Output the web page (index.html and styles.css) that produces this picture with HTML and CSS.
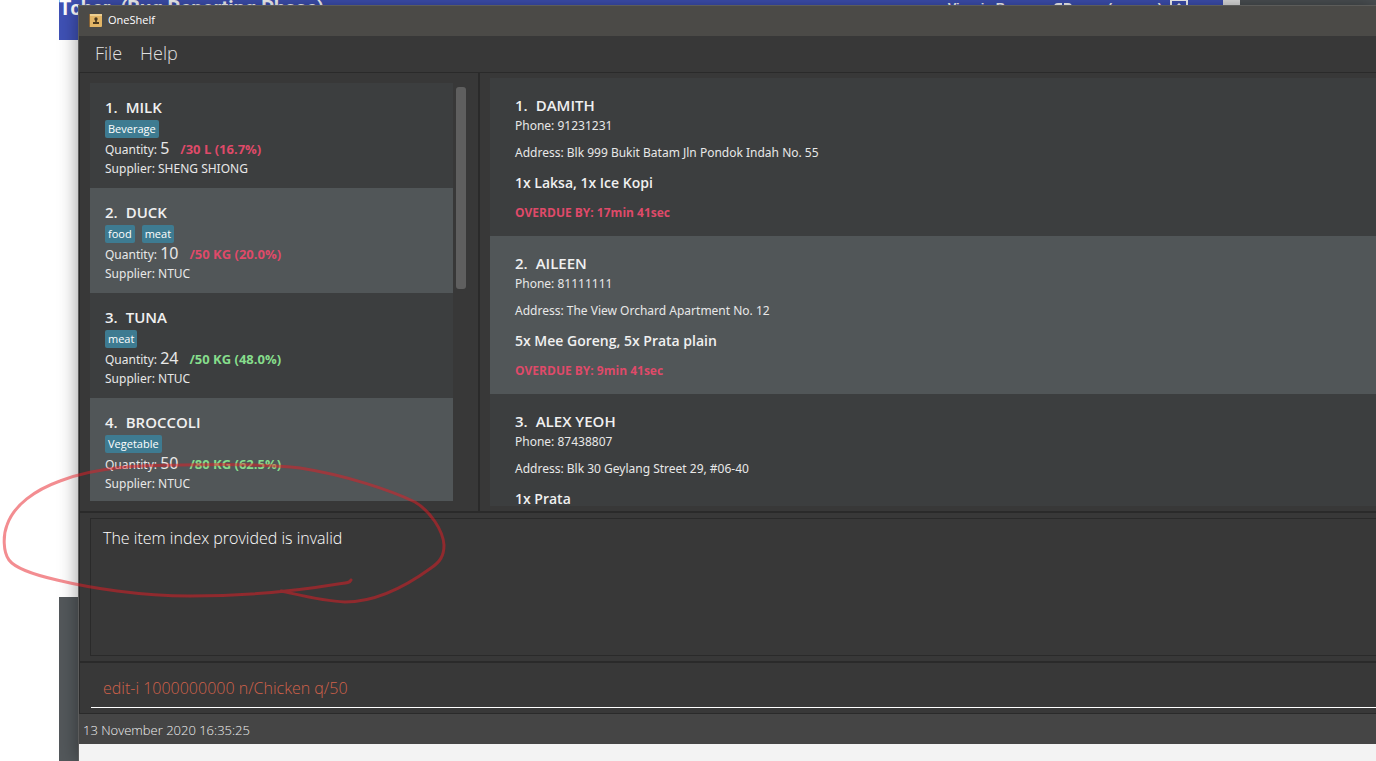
FILE: index.html
```html
<!DOCTYPE html>
<html lang="en">
<head>
<meta charset="utf-8">
<title>OneShelf</title>
<link rel="stylesheet" href="styles.css">
</head>
<body>
<div class="desktop">
  <div class="backdrop">
    <div class="backdrop-bar">
      <span class="backdrop-title">Tcher&nbsp; (Bug Reporting Phase)</span>
      <span class="backdrop-links">
        <span>View in Browser</span>
        <svg class="backdrop-link-icon" width="18" height="12" viewBox="0 0 18 12" fill="none" stroke="#fff" stroke-width="2"><path d="M8 4H4a3 3 0 0 0 0 6h4M10 4h4a3 3 0 0 1 0 6h-4"/></svg>
        <span class="backdrop-user">(coggey)</span>
        <svg width="18" height="18" viewBox="0 0 18 18"><path d="M1 0h16v17H1z" fill="none" stroke="#fff" stroke-width="2"/><path d="M9 3l4 4H5z" fill="#fff"/></svg>
      </span>
    </div>
    <div class="backdrop-scroll"></div>
    <div class="backdrop-dark"></div>
  </div>
  <div class="backdrop-foot"></div>

  <main class="window">
    <header class="titlebar">
      <svg width="13" height="13" viewBox="0 0 13 13">
        <rect width="13" height="13" rx="1" fill="#e2b566"/>
        <path d="M0 0h1v13H0z" fill="#8a6434"/>
        <path d="M1 0h12v2H1z" fill="#edcf8f"/>
        <circle cx="7" cy="5" r="1.700" fill="#4b3a20"/>
        <path d="M6.200 5.500h1.600v2.500h2.200v2H4v-2h2.200z" fill="#4b3a20"/>
      </svg>
      <span>OneShelf</span>
    </header>
    <nav class="menubar">
      <button type="button">File</button>
      <button type="button">Help</button>
    </nav>
    <div class="split">
      <section class="items-pane" aria-label="Items">
        <ol class="items">
          <li class="item">
            <h2 class="name"><span>1.</span><span>MILK</span></h2>
            <div class="tags"><span class="tag">Beverage</span></div>
            <p class="quantity">Quantity: <span class="amount">5</span><b class="low">/30 L (16.7%)</b></p>
            <p class="line">Supplier: SHENG SHIONG</p>
          </li>
          <li class="item">
            <h2 class="name"><span>2.</span><span>DUCK</span></h2>
            <div class="tags"><span class="tag">food</span><span class="tag">meat</span></div>
            <p class="quantity">Quantity: <span class="amount">10</span><b class="low">/50 KG (20.0%)</b></p>
            <p class="line">Supplier: NTUC</p>
          </li>
          <li class="item">
            <h2 class="name"><span>3.</span><span>TUNA</span></h2>
            <div class="tags"><span class="tag">meat</span></div>
            <p class="quantity">Quantity: <span class="amount">24</span><b class="ok">/50 KG (48.0%)</b></p>
            <p class="line">Supplier: NTUC</p>
          </li>
          <li class="item">
            <h2 class="name"><span>4.</span><span>BROCCOLI</span></h2>
            <div class="tags"><span class="tag">Vegetable</span></div>
            <p class="quantity">Quantity: <span class="amount">50</span><b class="ok">/80 KG (62.5%)</b></p>
            <p class="line">Supplier: NTUC</p>
          </li>
        </ol>
        <div class="scrolltrack"><div class="scrollthumb"></div></div>
      </section>
      <section class="orders-pane" aria-label="Orders">
        <ol class="orders">
          <li class="order">
            <h2 class="name"><span>1.</span><span>DAMITH</span></h2>
            <p class="line">Phone: 91231231</p>
            <p class="line address">Address: Blk 999 Bukit Batam Jln Pondok Indah No. 55</p>
            <p class="dishes">1x Laksa, 1x Ice Kopi</p>
            <p class="overdue low">OVERDUE BY: 17min 41sec</p>
          </li>
          <li class="order">
            <h2 class="name"><span>2.</span><span>AILEEN</span></h2>
            <p class="line">Phone: 81111111</p>
            <p class="line address">Address: The View Orchard Apartment No. 12</p>
            <p class="dishes">5x Mee Goreng, 5x Prata plain</p>
            <p class="overdue low">OVERDUE BY: 9min 41sec</p>
          </li>
          <li class="order">
            <h2 class="name"><span>3.</span><span>ALEX YEOH</span></h2>
            <p class="line">Phone: 87438807</p>
            <p class="line address">Address: Blk 30 Geylang Street 29, #06-40</p>
            <p class="dishes">1x Prata</p>
          </li>
        </ol>
      </section>
    </div>
    <div class="result">
      <textarea class="result-text" aria-label="Result" readonly>The item index provided is invalid</textarea>
    </div>
    <div class="command">
      <input class="command-text" type="text" aria-label="Command" value="edit-i 1000000000 n/Chicken q/50">
    </div>
    <footer class="status">13 November 2020 16:35:25</footer>
    <div class="below"></div>
  </main>

  <svg class="marker" width="460" height="160" viewBox="0 450 460 160" fill="none" aria-hidden="true">
    <path d="M351 580C350 583 345 583 338 584C290 592 235 596 190 596C140 596 90 588 57 580C35 575 15 568 9 560C3 552 3 535 7 525C14 505 35 490 60 481C95 467 140 465 180 465C225 464 270 464 300 468C345 475 390 490 415 502C430 511 443 530 444 545C444 556 440 562 431 568C405 587 375 602 345 602C322 601 300 595 281 591"/>
  </svg>
</div>
</body>
</html>
```

FILE: styles.css
```css
* {
  box-sizing: border-box;
}

body {
  margin: 0;
  background: #fff;
  font-family: "Open Sans", "Noto Sans", sans-serif;
}

h2, p, ol {
  margin: 0;
  padding: 0;
  font-weight: 400;
}

ol {
  list-style: none;
}

.desktop {
  position: relative;
  display: flex;
  flex-direction: column;
  justify-content: space-between;
  min-height: 100vh;
  padding-left: 59px;
  overflow: hidden;
}

.backdrop {
  display: flex;
  height: 40px;
}

.backdrop-bar {
  display: flex;
  flex: 1;
  justify-content: space-between;
  padding-right: 35px;
  background: #3f51b5;
  color: #fff;
  font-family: "Liberation Sans", sans-serif;
  font-weight: 700;
  white-space: nowrap;
}

.backdrop-title {
  margin-top: -4px;
  font-family: Roboto, sans-serif;
  font-size: 20px;
  line-height: 24px;
}

.backdrop-links {
  display: flex;
  align-items: flex-start;
  font-size: 13px;
  line-height: 15px;
}

.backdrop-link-icon {
  margin-left: 6px;
}

.backdrop-user {
  margin: 0 8px 0 36px;
}

.backdrop-scroll {
  width: 17px;
  background: #e4e4e4;
}

.backdrop-dark {
  width: 136px;
  background: #4c5154;
}

.backdrop-foot {
  height: 164px;
  background: #53585b;
}

.window {
  position: absolute;
  inset: 5px 0 0 78px;
  display: flex;
  flex-direction: column;
  border-top: 1px solid #5c5c5a;
  border-left: 1px solid #5c5c5c;
  background: #383838;
  box-shadow: 0 0 18px rgba(0, 0, 0, 0.4);
}

.titlebar {
  display: flex;
  align-items: center;
  gap: 6px;
  height: 30px;
  padding: 0 0 2px 10px;
  background: #4b4a47;
  color: #fff;
  font-size: 11px;
  line-height: 16px;
}

.menubar {
  display: flex;
  gap: 18px;
  height: 36px;
  padding-left: 16px;
}

.menubar button {
  padding: 0;
  border: 0;
  background: none;
  color: #e0e0e0;
  font: 300 18px/32px "Open Sans", "Noto Sans", sans-serif;
  height: 34px;
}

.split {
  display: flex;
  flex: 1;
  min-height: 0;
  border-top: 1px solid #2a2a2a;
  border-left: 1px solid #2a2a2a;
}

.items-pane {
  display: flex;
  flex: none;
  width: 400px;
  padding: 10px 12px 10px 10px;
  border-right: 2px solid #2a2a2a;
}

.items {
  flex: 1;
  overflow: hidden;
}

.item {
  height: 105px;
  padding: 14px 15px 0;
  background: #3c3e3f;
}

.item:nth-child(even),
.order:nth-child(even) {
  background: #515658;
}

.scrolltrack {
  width: 13px;
  padding: 4px 0 0 3px;
}

.scrollthumb {
  height: 202px;
  border-radius: 3px;
  background: #5f5f5f;
}

.name {
  display: flex;
  gap: 8px;
  color: #f0f0f0;
  font-size: 15px;
  font-weight: 600;
  line-height: 20px;
}

.tags {
  display: flex;
  gap: 7px;
  margin-top: 3px;
}

.tag {
  padding: 0 3px;
  border-radius: 2px;
  background: #3e7b91;
  color: #fff;
  font-size: 11px;
  line-height: 18px;
}

.quantity {
  color: #e8e8e8;
  font-family: "Noto Sans", sans-serif;
  font-size: 12px;
  line-height: 22px;
}

.quantity b {
  font-family: "Open Sans", "Noto Sans", sans-serif;
  font-size: 13px;
}

.amount {
  margin-right: 11px;
  font-size: 16px;
  line-height: 20px;
}

.line {
  color: #e8e8e8;
  font-family: "Noto Sans", sans-serif;
  font-size: 12px;
  line-height: 16px;
}

.low {
  color: #df4a69;
}

.ok {
  color: #86dd8c;
}

.orders-pane {
  display: flex;
  flex: 1;
  padding: 5px 0 5px 10px;
}

.orders {
  flex: 1;
  overflow: hidden;
  background: #3c3e3f;
}

.order {
  height: 158px;
  padding: 17px 25px 0;
}

.order .line {
  line-height: 22px;
}

.address {
  margin-top: 5px;
}

.dishes {
  margin-top: 9px;
  color: #f0f0f0;
  font-size: 14px;
  font-weight: 600;
  line-height: 20px;
}

.overdue {
  margin-top: 10px;
  font-size: 12px;
  font-weight: 700;
  line-height: 20px;
}

.result {
  flex: none;
  display: flex;
  padding: 5px 0 5px 10px;
  border-top: 2px solid #2a2a2a;
  border-left: 1px solid #2a2a2a;
}

.result-text {
  flex: 1;
  height: 138px;
  padding: 7px 12px;
  border: solid #2a2a2a;
  border-width: 1px 0 1px 1px;
  outline: 0;
  background: none;
  color: #fff;
  font: 300 16px/24px "Open Sans", "Noto Sans", sans-serif;
  resize: none;
}

.command {
  display: flex;
  height: 53px;
  padding: 5px 0 5px 11px;
  border: solid #2a2a2a;
  border-width: 2px 0 1px 1px;
}

.command-text {
  flex: 1;
  padding: 0 12px;
  border: 0;
  border-bottom: 1px solid #fff;
  outline: 0;
  background: none;
  color: #d0614a;
  font: 300 16px/24px "Open Sans", "Noto Sans", sans-serif;
}

.status {
  height: 30px;
  padding-left: 4px;
  background: #454545;
  color: #f0f0f0;
  font-size: 13px;
  font-weight: 300;
  line-height: 32px;
}

.below {
  height: 17px;
  background: #f3f3f3;
}

.marker {
  position: absolute;
  top: 450px;
  left: 0;
  pointer-events: none;
}

.marker path {
  stroke: rgba(232, 28, 36, 0.5);
  stroke-width: 3;
  stroke-linecap: round;
}
```
